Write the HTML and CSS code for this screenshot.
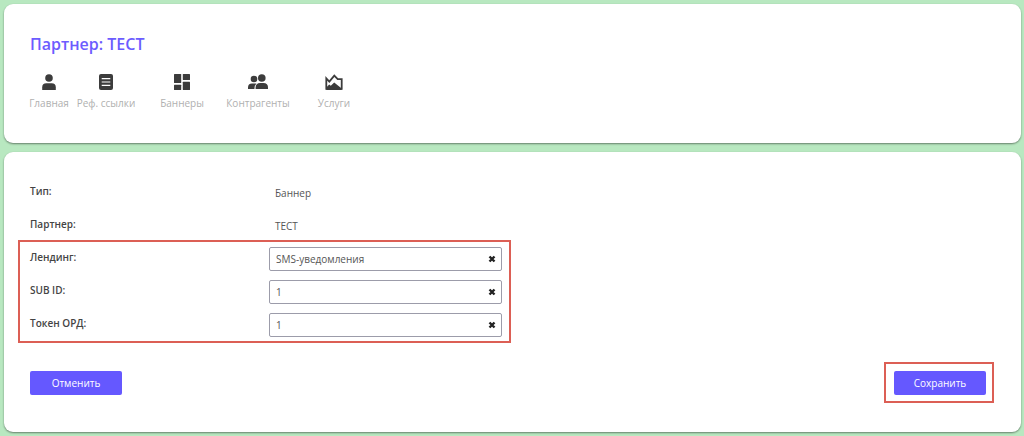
FILE: index.html
```html
<!DOCTYPE html>
<html lang="ru">
<head>
  <meta charset="UTF-8">
  <meta name="viewport" content="width=device-width, initial-scale=1">
  <title>Партнер: ТЕСТ</title>
  <link rel="stylesheet" href="styles.css">
</head>
<body>
  <header class="card card-header">
    <h1>Партнер: ТЕСТ</h1>
    <nav class="menu">
      <a href="#" class="menu-item menu-item-first">
        <svg viewBox="0 0 16 16"><circle cx="8" cy="4" r="3.8"/><path d="M1.2 16v-2.6Q1.2 9.2 5.4 9.2h5.2q4.2 0 4.2 4.2V16z"/></svg>
        <span>Главная</span>
      </a>
      <a href="#" class="menu-item">
        <svg viewBox="0 0 16 16"><rect x="1" width="14" height="16" rx="2"/><path class="lines" d="M3.7 4.6h8.6M3.7 8h8.6M3.7 11.4h8.6"/></svg>
        <span>Реф. ссылки</span>
      </a>
      <a href="#" class="menu-item">
        <svg viewBox="0 0 16 16"><rect width="7.2" height="9" rx=".5"/><rect x="8.8" width="7.2" height="6" rx=".5"/><rect y="10.8" width="7.2" height="5.2" rx=".5"/><rect x="8.8" y="7.8" width="7.2" height="8.2" rx=".5"/></svg>
        <span>Баннеры</span>
      </a>
      <a href="#" class="menu-item">
        <svg class="wide" viewBox="0 0 20 16"><circle cx="6" cy="5" r="3.3"/><circle cx="13.8" cy="4" r="3.8"/><path d="M0 15v-1.6q0-4 4-4h4.4q-2 1.8-2 5.6z"/><path d="M7.6 15v-1.4q0-4.6 4.6-4.6h3.2q4.6 0 4.6 4.6V15z"/></svg>
        <span>Контрагенты</span>
      </a>
      <a href="#" class="menu-item">
        <svg class="wide" viewBox="0 0 18 16"><path class="frame" d="M1.3 4.4l3 3.2 5-6 3.4 3.6h4v9.6H1.3z"/><path d="M1.3 13.4l2.9-3 1.6 1.4 3.4-3.4 7.5 6.2V16H1.3z"/></svg>
        <span>Услуги</span>
      </a>
    </nav>
  </header>

  <main class="card card-main">
    <form>
      <div class="fields">
        <div class="row">
          <span class="name">Тип:</span>
          <span class="value">Баннер</span>
        </div>
        <div class="row">
          <span class="name">Партнер:</span>
          <span class="value">ТЕСТ</span>
        </div>
        <div class="fields-group">
          <div class="row">
            <label class="name" for="landing">Лендинг:</label>
            <div class="field">
              <input type="text" id="landing" value="SMS-уведомления">
              <button type="button" class="clear" aria-label="Очистить"><svg viewBox="0 0 8 8"><path d="M1.5 1.5l5 5M6.5 1.5l-5 5"/></svg></button>
            </div>
          </div>
          <div class="row">
            <label class="name" for="sub-id">SUB ID:</label>
            <div class="field">
              <input type="text" id="sub-id" value="1">
              <button type="button" class="clear" aria-label="Очистить"><svg viewBox="0 0 8 8"><path d="M1.5 1.5l5 5M6.5 1.5l-5 5"/></svg></button>
            </div>
          </div>
          <div class="row">
            <label class="name" for="token">Токен ОРД:</label>
            <div class="field">
              <input type="text" id="token" value="1">
              <button type="button" class="clear" aria-label="Очистить"><svg viewBox="0 0 8 8"><path d="M1.5 1.5l5 5M6.5 1.5l-5 5"/></svg></button>
            </div>
          </div>
        </div>
      </div>
      <div class="actions">
        <button type="button" class="btn">Отменить</button>
        <div class="save">
          <button type="submit" class="btn">Сохранить</button>
        </div>
      </div>
    </form>
  </main>
</body>
</html>
```

FILE: styles.css
```css
* {
  box-sizing: border-box;
}
body {
  margin: 0;
  padding: 4px 3px 4px 4px;
  background-color: #b8e8c0;
  color: #555;
  font-family: "Open Sans", Inter, sans-serif;
  font-size: 10px;
  line-height: 20px;
}
.card {
  background-color: white;
  border-radius: 9px;
  box-shadow: 0 1px 2px rgba(0,0,0,0.45);
}
.card-header {
  padding: 30px 26px;
  margin-bottom: 9px;
}
h1 {
  margin: 0 0 20px;
  color: #6c5cff;
  font-size: 16px;
  font-weight: 600;
  line-height: 20px;
}

/* menu */
.menu {
  display: flex;
}
.menu-item {
  display: flex;
  flex-direction: column;
  align-items: center;
  gap: 3px;
  width: 76px;
  color: #b0b0b0;
  font-weight: 500;
  text-decoration: none;
  white-space: nowrap;
}
.menu-item-first {
  width: 38px;
}
.menu-item svg {
  width: 16px;
  height: 16px;
  fill: #3c3c3c;
}
.menu-item svg.wide {
  width: 20px;
}
.menu-item svg .lines {
  fill: none;
  stroke: white;
  stroke-width: 1.2;
}
.menu-item svg .frame {
  fill: none;
  stroke: #3c3c3c;
  stroke-width: 1.8;
}

/* form */
.card-main {
  padding: 29px 35px 37px 26px;
}
.fields,
.fields-group {
  display: flex;
  flex-direction: column;
  gap: 9px;
}
.fields {
  width: 50%;
  margin-bottom: 34px;
}
.fields-group {
  position: relative;
}
.row {
  display: grid;
  grid-template-columns: 1fr 1fr;
  height: 24px;
}
.name {
  color: #444;
  font-weight: 600;
}
.value {
  padding-left: 6px;
  line-height: 24px;
}
.field {
  display: flex;
  align-items: center;
  margin-right: 6px;
  padding: 0 5px 0 6px;
  border: 1px solid #9c9caa;
  border-radius: 2px;
}
.field input {
  flex: 1;
  min-width: 0;
  padding: 0;
  border: none;
  outline: none;
  background: none;
  color: #555;
  font: inherit;
}
.clear {
  display: flex;
  padding: 0;
  border: none;
  background: none;
  cursor: pointer;
}
.clear svg {
  width: 8px;
  height: 8px;
  stroke: #222;
  stroke-width: 2.4;
}
.actions {
  display: flex;
  justify-content: space-between;
}
.btn {
  display: block;
  width: 92px;
  height: 24px;
  padding: 0;
  border: none;
  border-radius: 2px;
  background-color: #6558ff;
  color: white;
  font: inherit;
  cursor: pointer;
}
.save {
  position: relative;
}

/* red frames over the fields and the save button */
.fields-group::after,
.save::after {
  content: "";
  position: absolute;
  border: 2px solid #dc5f55;
  pointer-events: none;
}
.fields-group::after {
  inset: -7px -3px -6px -12px;
}
.save::after {
  inset: -9px -8px -8px -10px;
}
```
